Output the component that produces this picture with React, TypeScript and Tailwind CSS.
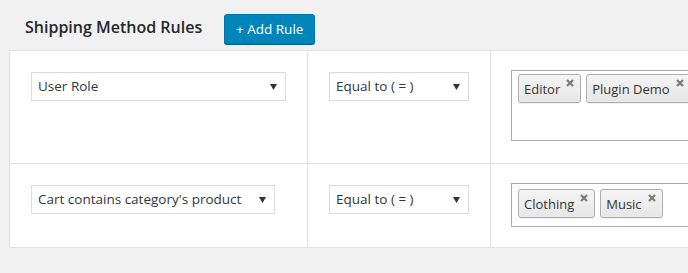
import { useState } from "react";

type Rule = {
  field: string;
  fieldWidth: string;
  values: string[];
  boxHeight: string;
  rowClass: string;
  tagTop: string;
};

const rules: Rule[] = [
  {
    field: "User Role",
    fieldWidth: "w-[255px]",
    values: ["Editor", "Plugin Demo"],
    boxHeight: "h-[71px]",
    rowClass: "h-[113px] border-b border-[#e1e1e1]",
    tagTop: "pt-[3px]",
  },
  {
    field: "Cart contains category's product",
    fieldWidth: "w-[244px]",
    values: ["Clothing", "Music"],
    boxHeight: "h-[44px]",
    rowClass: "h-[83px]",
    tagTop: "pt-[5px]",
  },
];

function FakeSelect({ label, width }: { label: string; width: string }) {
  return (
    <div
      className={`${width} h-[29px] flex items-center justify-between border border-[#dddddd] bg-white pl-[6px] pr-[8px] text-[13.5px] text-[#32373c] shadow-[inset_0_1px_2px_rgba(0,0,0,0.04)]`}
    >
      <span>{label}</span>
      <svg width="7" height="6" viewBox="0 0 7 6" className="mt-[1px]">
        <path d="M0 0 H7 L3.5 6 Z" fill="#333" />
      </svg>
    </div>
  );
}

function Tag({ text }: { text: string }) {
  return (
    <li className="flex items-start h-[29px] shrink-0 rounded-[3px] border border-[#aaaaaa] bg-gradient-to-b from-[#f4f4f4] to-[#e6e6e6] pl-[5px] pr-[6px] shadow-[0_0_2px_white_inset,0_1px_0_rgba(0,0,0,0.05)]">
      <span className="self-center mt-[2px] text-[13px] text-[#333]">{text}</span>
      {/* remove cross */}
      <svg width="8" height="8" viewBox="0 0 8 8" className="ml-[6px] mt-[4px]">
        <path d="M1 1 L7 7 M7 1 L1 7" stroke="#7a7a7a" strokeWidth="2.2" />
      </svg>
    </li>
  );
}

export default function App() {
  const [list] = useState(rules);

  return (
    <div
      className="w-[688px] h-[273px] overflow-hidden bg-[#f1f1f1]"
      style={{ fontFamily: '"Open Sans", "Noto Sans", sans-serif' }}
    >
      <div className="flex items-start pl-[25px] pt-[14px]">
        <h2 className="mt-[1px] text-[16px] font-semibold text-[#23282d]">
          Shipping Method Rules
        </h2>
        <button className="ml-[22px] h-[30px] w-[91px] rounded-[3px] border border-[#0073aa] bg-[#0085ba] text-[13.5px] text-white shadow-[0_1px_0_#006799]">
          + Add Rule
        </button>
      </div>

      <div className="ml-[9px] mt-[6px] w-[900px] border border-[#e1e1e1] bg-white">
        {list.map((r) => (
          <div
            key={r.field}
            className={`grid grid-cols-[298px_183px_1fr] ${r.rowClass}`}
          >
            <div className="border-r border-[#e1e1e1] pl-[21px] pt-[21px]">
              <FakeSelect label={r.field} width={r.fieldWidth} />
            </div>
            <div className="border-r border-[#e1e1e1] pl-[21px] pt-[21px]">
              <FakeSelect label="Equal to ( = )" width="w-[140px]" />
            </div>
            <div className="pl-[20px] pt-[19px]">
              <ul
                className={`${r.boxHeight} ${r.tagTop} flex w-[360px] gap-[5px] border border-[#aaaaaa] pl-[6px] bg-white`}
              >
                {r.values.map((v) => (
                  <Tag key={v} text={v} />
                ))}
              </ul>
            </div>
          </div>
        ))}
      </div>
    </div>
  );
}
